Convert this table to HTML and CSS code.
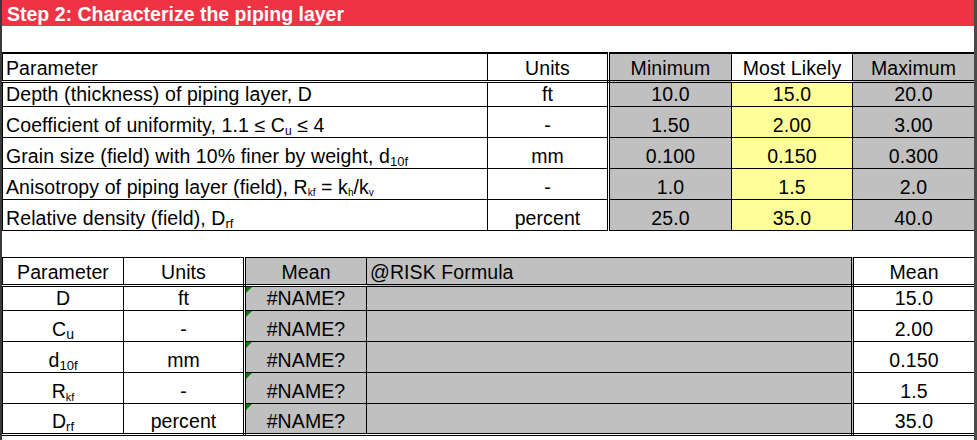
FILE: index.html
```html
<!DOCTYPE html>
<html>
<head>
<meta charset="utf-8">
<link rel="stylesheet" href="styles.css">
</head>
<body>
<div class="sheet">
  <div class="title">Step 2: Characterize the piping layer</div>
  <div class="gap"></div>
  <table class="grid top">
    <colgroup>
      <col class="c-param"><col class="c-units"><col class="c-min"><col class="c-ml"><col class="c-max">
    </colgroup>
    <thead>
      <tr class="hrow">
        <th class="left">Parameter</th>
        <th class="dbl-r">Units</th>
        <th class="grey">Minimum</th>
        <th>Most Likely</th>
        <th class="grey">Maximum</th>
      </tr>
    </thead>
    <tbody>
      <tr class="r1">
        <td class="left">Depth (thickness) of piping layer, D</td>
        <td class="dbl-r">ft</td>
        <td class="grey">10.0</td>
        <td class="yellow">15.0</td>
        <td class="grey">20.0</td>
      </tr>
      <tr>
        <td class="left">Coefficient of uniformity, 1.1 ≤ C<span class="sub s12">u</span> ≤ 4</td>
        <td class="dbl-r">-</td>
        <td class="grey">1.50</td>
        <td class="yellow">2.00</td>
        <td class="grey">3.00</td>
      </tr>
      <tr>
        <td class="left">Grain size (field) with 10% finer by weight, d<span class="sub s13">10f</span></td>
        <td class="dbl-r">mm</td>
        <td class="grey">0.100</td>
        <td class="yellow">0.150</td>
        <td class="grey">0.300</td>
      </tr>
      <tr>
        <td class="left">Anisotropy of piping layer (field), R<span class="sub s10">kf</span> = k<span class="sub s10">h</span>/k<span class="sub s10">v</span></td>
        <td class="dbl-r">-</td>
        <td class="grey">1.0</td>
        <td class="yellow">1.5</td>
        <td class="grey">2.0</td>
      </tr>
      <tr>
        <td class="left">Relative density (field), D<span class="sub s13">rf</span></td>
        <td class="dbl-r">percent</td>
        <td class="grey">25.0</td>
        <td class="yellow">35.0</td>
        <td class="grey">40.0</td>
      </tr>
    </tbody>
  </table>
  <div class="gap2"></div>
  <table class="grid bottom">
    <colgroup>
      <col class="b-param"><col class="b-units"><col class="b-mean"><col class="b-formula"><col class="b-mean2">
    </colgroup>
    <thead>
      <tr class="hrow">
        <th>Parameter</th>
        <th class="dbl-r">Units</th>
        <th class="grey">Mean</th>
        <th class="grey left dbl-r">@RISK Formula</th>
        <th>Mean</th>
      </tr>
    </thead>
    <tbody>
      <tr class="r1">
        <td>D</td>
        <td class="dbl-r">ft</td>
        <td class="grey note">#NAME?</td>
        <td class="grey dbl-r"></td>
        <td>15.0</td>
      </tr>
      <tr>
        <td>C<span class="sub s14">u</span></td>
        <td class="dbl-r">-</td>
        <td class="grey note">#NAME?</td>
        <td class="grey dbl-r"></td>
        <td>2.00</td>
      </tr>
      <tr>
        <td>d<span class="sub s13">10f</span></td>
        <td class="dbl-r">mm</td>
        <td class="grey note">#NAME?</td>
        <td class="grey dbl-r"></td>
        <td>0.150</td>
      </tr>
      <tr>
        <td>R<span class="sub s11">kf</span></td>
        <td class="dbl-r">-</td>
        <td class="grey note">#NAME?</td>
        <td class="grey dbl-r"></td>
        <td>1.5</td>
      </tr>
      <tr>
        <td>D<span class="sub s13">rf</span></td>
        <td class="dbl-r">percent</td>
        <td class="grey note">#NAME?</td>
        <td class="grey dbl-r"></td>
        <td>35.0</td>
      </tr>
    </tbody>
  </table>
</div>
</body>
</html>
```

FILE: styles.css
```css
html, body {
  margin: 0;
  padding: 0;
  background: #ffffff;
}

.sheet {
  width: 972px;
  height: 440px;
  border-left: 2px solid #3a3a3a;
  border-right: 3px solid #4a4a4a;
  font-family: "Liberation Sans", Arial, sans-serif;
  font-size: 19.5px;
  color: #000;
  overflow: hidden;
  display: flex;
  flex-direction: column;
}

.title {
  height: 26px;
  flex: none;
  background: #ee3344;
  color: #ffffff;
  font-weight: bold;
  line-height: 24px;
  padding-left: 5px;
  box-sizing: border-box;
  padding-top: 2px;
  letter-spacing: 0;
}

.gap { height: 26px; flex: none; }
.gap2 { height: 26px; flex: none; }

.grid {
  border-collapse: collapse;
  table-layout: fixed;
  width: 972px;
  flex: none;
}

.grid th, .grid td {
  border: 1px solid #000;
  font-weight: normal;
  text-align: center;
  vertical-align: bottom;
  padding: 0 3px 2px 3px;
  line-height: 20px;
  white-space: nowrap;
  height: 31px;
  box-sizing: border-box;
  letter-spacing: 0.1px;
}

.grid .hrow th { height: 28px; border-bottom: 3px double #000; }
.grid .r1 td { height: 25px; }

.top { border-top: 2px solid #000; }
.top tbody tr:last-child td { border-bottom: 1px solid #000; }

.bottom .hrow th { height: 28px; }
.bottom tbody tr:last-child td { border-bottom: 3px double #000; }

.grid .left { text-align: left; }
.grid .dbl-r { border-right: 3px double #000; }

.grey { background: #c0c0c0; }
.yellow { background: #ffff99; }

.c-param { width: 485px; }
.c-units { width: 121px; }
.c-min { width: 123px; }
.c-ml { width: 121px; }
.c-max { width: 122px; }

.b-param { width: 121px; }
.b-units { width: 121px; }
.b-mean { width: 122px; }
.b-formula { width: 486px; }
.b-mean2 { width: 122px; }

.sub {
  vertical-align: -3px;
  line-height: 0;
  letter-spacing: 0;
}
.s10 { font-size: 10px; vertical-align: -2px; }
.s11 { font-size: 11px; }
.s12 { font-size: 12px; }
.s13 { font-size: 13px; }
.s14 { font-size: 14px; }

.note { position: relative; }
.note::before {
  content: "";
  position: absolute;
  left: 0;
  top: 0;
  border-top: 6px solid #008000;
  border-right: 6px solid transparent;
}
```
